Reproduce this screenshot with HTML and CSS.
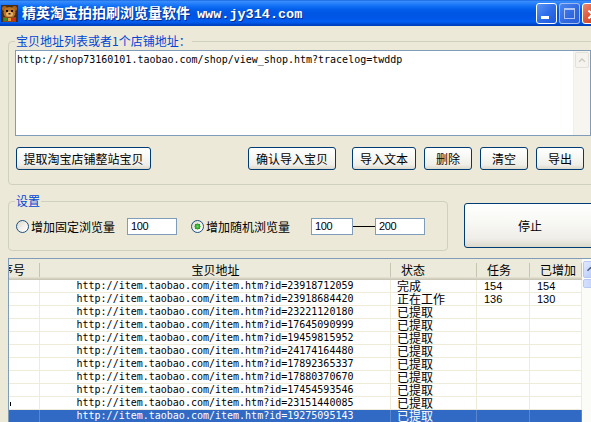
FILE: index.html
```html
<!DOCTYPE html>
<html>
<head>
<meta charset="utf-8">
<title>精英淘宝拍拍刷浏览量软件</title>
<link rel="stylesheet" href="styles.css">
</head>
<body>
<div class="window">
  <div class="titlebar">
    <svg class="appicon" width="17" height="17" viewBox="0 0 17 17">
      <rect x="0" y="0" width="17" height="17" fill="#4a2c14"/>
      <circle cx="3.5" cy="3.5" r="2.5" fill="#a8621e"/>
      <circle cx="13.5" cy="3.5" r="2.5" fill="#a8621e"/>
      <ellipse cx="8.5" cy="7.5" rx="6" ry="5.5" fill="#b87428"/>
      <ellipse cx="8.5" cy="9" rx="3.5" ry="2.6" fill="#e8b468"/>
      <rect x="5" y="5" width="2" height="2" fill="#1a0c04"/>
      <rect x="10" y="5" width="2" height="2" fill="#1a0c04"/>
      <rect x="7.5" y="8" width="2" height="1.5" fill="#2a1408"/>
      <rect x="2" y="12" width="13" height="5" fill="#8c4a1c"/>
      <rect x="3" y="13" width="3" height="3" fill="#3c8a2c"/>
      <rect x="11" y="13" width="3" height="3" fill="#c8321e"/>
      <rect x="7" y="13" width="3" height="3" fill="#e0a040"/>
    </svg>
    <span class="title">精英淘宝拍拍刷浏览量软件<span class="title-url">www.jy314.com</span></span>
    <div class="winbtns">
      <div class="wb wb-min"><span class="g-min"></span></div>
      <div class="wb wb-max"><span class="g-max"></span></div>
      <div class="wb wb-close">
        <svg width="21" height="21" viewBox="0 0 21 21"><path d="M6 6 L15 15 M15 6 L6 15" stroke="#fff" stroke-width="2.2"/></svg>
      </div>
    </div>
  </div>

  <div class="client">
    <fieldset class="group group-urls">
      <legend>宝贝地址列表或者1个店铺地址：</legend>
      <div class="textbox">
        <div class="textbox-text">http://shop73160101.taobao.com/shop/view_shop.htm?tracelog=twddp</div>
        <div class="tb-scroll">
          <div class="tb-up">
            <svg width="15" height="15" viewBox="0 0 15 15"><path d="M4 9 L7.5 5.5 L11 9" fill="none" stroke="#c9c7ba" stroke-width="1.6"/></svg>
          </div>
        </div>
      </div>
      <div class="btnrow">
        <button class="btn b-fetch">提取淘宝店铺整站宝贝</button>
        <button class="btn b-confirm">确认导入宝贝</button>
        <button class="btn b-import">导入文本</button>
        <button class="btn b-small">删除</button>
        <button class="btn b-small">清空</button>
        <button class="btn b-small">导出</button>
      </div>
    </fieldset>

    <div class="settings-row">
      <fieldset class="group group-settings">
        <legend>设置</legend>
        <div class="opts">
          <span class="radio"></span>
          <span class="lbl">增加固定浏览量</span>
          <span class="input in-fixed">100</span>
          <span class="radio checked"></span>
          <span class="lbl">增加随机浏览量</span>
          <span class="input in-min">100</span>
          <span class="dash"></span>
          <span class="input in-max">200</span>
        </div>
      </fieldset>
      <button class="btn btn-stop">停止</button>
    </div>

    <div class="listview">
      <div class="lv-main">
        <div class="lv-head">
          <span class="h-no"><span class="h-no-text">序号</span></span>
          <span class="h-url">宝贝地址</span>
          <span class="h-col">状态</span>
          <span class="h-col">任务</span>
          <span class="h-col">已增加</span>
        </div>
        <div class="lv-row"><span></span><span class="c-url">http://item.taobao.com/item.htm?id=23918712059</span><span class="c-st">完成</span><span class="c-num">154</span><span class="c-num">154</span></div>
        <div class="lv-row"><span></span><span class="c-url">http://item.taobao.com/item.htm?id=23918684420</span><span class="c-st">正在工作</span><span class="c-num">136</span><span class="c-num">130</span></div>
        <div class="lv-row"><span></span><span class="c-url">http://item.taobao.com/item.htm?id=23221120180</span><span class="c-st">已提取</span><span class="c-num"></span><span class="c-num"></span></div>
        <div class="lv-row"><span></span><span class="c-url">http://item.taobao.com/item.htm?id=17645090999</span><span class="c-st">已提取</span><span class="c-num"></span><span class="c-num"></span></div>
        <div class="lv-row"><span></span><span class="c-url">http://item.taobao.com/item.htm?id=19459815952</span><span class="c-st">已提取</span><span class="c-num"></span><span class="c-num"></span></div>
        <div class="lv-row"><span></span><span class="c-url">http://item.taobao.com/item.htm?id=24174164480</span><span class="c-st">已提取</span><span class="c-num"></span><span class="c-num"></span></div>
        <div class="lv-row"><span></span><span class="c-url">http://item.taobao.com/item.htm?id=17892365337</span><span class="c-st">已提取</span><span class="c-num"></span><span class="c-num"></span></div>
        <div class="lv-row"><span></span><span class="c-url">http://item.taobao.com/item.htm?id=17880370670</span><span class="c-st">已提取</span><span class="c-num"></span><span class="c-num"></span></div>
        <div class="lv-row"><span></span><span class="c-url">http://item.taobao.com/item.htm?id=17454593546</span><span class="c-st">已提取</span><span class="c-num"></span><span class="c-num"></span></div>
        <div class="lv-row"><span class="c-focus"></span><span class="c-url">http://item.taobao.com/item.htm?id=23151440085</span><span class="c-st">已提取</span><span class="c-num"></span><span class="c-num"></span></div>
        <div class="lv-row selected"><span></span><span class="c-url">http://item.taobao.com/item.htm?id=19275095143</span><span class="c-st">已提取</span><span class="c-num"></span><span class="c-num"></span></div>
      </div>
      <div class="lv-scroll">
        <div class="lv-up">
          <svg width="15" height="15" viewBox="0 0 15 15"><path d="M4 9 L7.5 5.5 L11 9" fill="none" stroke="#4d6185" stroke-width="1.8"/></svg>
        </div>
        <div class="lv-thumb"></div>
      </div>
    </div>
  </div>
</div>
</body>
</html>
```

FILE: styles.css
```css
* { box-sizing: border-box; }
html, body { margin: 0; padding: 0; }
body {
  width: 591px;
  height: 422px;
  overflow: hidden;
  background: #ECE9D8;
  font-family: "Noto Sans CJK SC", "Noto Sans", sans-serif;
  font-size: 12px;
  color: #000;
}
.window { width: 608px; }

/* ---------- title bar ---------- */
.titlebar {
  height: 26px;
  display: flex;
  align-items: center;
  padding-left: 1px;
  background: linear-gradient(180deg,
    #0A5AD8 0px, #3D8FF8 1px, #2A83FB 3px, #1170F5 6px,
    #0461EC 9px, #0058E6 12px, #0055E4 16px, #0057EA 19px,
    #045FF2 21px, #0258E6 23px, #0048CC 24px, #003FB8 26px);
}
.appicon { flex: none; margin-top: 1px; }
.title {
  margin-left: 4px;
  color: #fff;
  font-weight: bold;
  font-size: 14px;
  line-height: 16px;
  text-shadow: 1px 1px 0 #0B2A86;
  white-space: nowrap;
}
.title-url {
  margin-left: 7px;
  font-family: "Liberation Mono", monospace;
  font-size: 13.5px;
}
.winbtns {
  margin-left: auto;
  display: flex;
  gap: 2px;
  margin-right: 5px;
}
.wb {
  width: 21px;
  height: 21px;
  border-radius: 3px;
  border: 1px solid #fff;
  display: flex;
}
.wb-min {
  background: linear-gradient(135deg, #5A96F8 0%, #2F6EEA 50%, #1D58DC 100%);
  align-items: flex-end;
  padding: 0 0 4px 4px;
}
.g-min { width: 8px; height: 3px; background: #fff; }
.wb-max {
  border-color: rgba(255,255,255,0.55);
  background: linear-gradient(135deg, #4A86EE 0%, #3168DF 60%, #2A5DD6 100%);
  align-items: center;
  justify-content: center;
}
.g-max {
  width: 11px;
  height: 11px;
  border: 1px solid rgba(255,255,255,0.6);
  border-top-width: 2px;
}
.wb-close {
  background: linear-gradient(135deg, #EA8A70 0%, #E0583C 45%, #C8401F 100%);
}

/* ---------- client ---------- */
.client { padding-left: 8px; }

.group {
  margin: 0;
  border: 1px solid #D0D0BF;
  border-radius: 4px;
  min-width: 0;
}
.group legend {
  padding: 0 1px;
  color: #0046D5;
  font-size: 12px;
  line-height: 14px;
}
.group-urls {
  margin-top: 8px;
  width: 600px;
  padding: 2px 6px 14px 6px;
}

.textbox {
  width: 576px;
  height: 86px;
  border: 1px solid #7F9DB9;
  background: #fff;
  display: flex;
}
.textbox-text {
  flex: 1;
  padding: 3px 1px;
  font-family: "DejaVu Sans Mono", "Liberation Mono", monospace;
  font-size: 10px;
  line-height: 12px;
  white-space: nowrap;
}
.tb-scroll {
  width: 17px;
  background: #F6F5F0;
  border-left: 1px solid #F0EFE9;
}
.tb-up {
  margin: 1px 1px 0 1px;
  height: 16px;
  border: 1px solid #E3E1D8;
  border-radius: 2px;
  background: #F4F3EE;
  display: flex;
  align-items: center;
  justify-content: center;
}

.btnrow {
  margin-top: 11px;
  display: flex;
}
.btn {
  height: 23px;
  padding: 0;
  border: 1px solid #003C74;
  border-radius: 3px;
  background: linear-gradient(180deg, #FFFFFF 0%, #F8F8F5 40%, #EFEEE8 80%, #DCD8CC 100%);
  font-family: "Noto Sans CJK SC", sans-serif;
  font-size: 12px;
  line-height: 14px;
  color: #000;
  display: flex;
  align-items: center;
  justify-content: center;
}
.b-fetch { width: 135px; margin-left: 1px; }
.b-confirm { width: 88px; margin-left: 97px; }
.b-import { width: 64px; margin-left: 16px; }
.b-small { width: 48px; margin-left: 8px; }

/* ---------- settings ---------- */
.settings-row {
  display: flex;
  align-items: flex-start;
  margin-top: 9px;
}
.group-settings {
  width: 440px;
  padding: 10px 6px 15px 6px;
}
.opts {
  height: 17px;
  display: flex;
  align-items: center;
}
.radio {
  width: 13px;
  height: 13px;
  border-radius: 50%;
  border: 1px solid #1C5180;
  background: linear-gradient(135deg, #DCD8CC 0%, #F4F3EE 60%, #FFFFFF 100%);
  margin-left: 1px;
  flex: none;
}
.radio.checked {
  margin-left: 14px;
  background:
    radial-gradient(circle at 50% 50%, #6BDB63 0, #2DAB2A 2px, #1F8F1E 2.8px, transparent 3.2px),
    linear-gradient(135deg, #DCD8CC 0%, #F4F3EE 60%, #FFFFFF 100%);
}
.lbl {
  margin-left: 2px;
  width: 84px;
  white-space: nowrap;
  line-height: 14px;
}
.input {
  height: 17px;
  border: 1px solid #7F9DB9;
  background: #fff;
  font-family: "Liberation Sans", sans-serif;
  font-size: 11px;
  letter-spacing: -0.4px;
  line-height: 15px;
  padding-left: 3px;
  flex: none;
}
.in-fixed { width: 50px; margin-left: 12px; }
.in-min { width: 42px; margin-left: 21px; }
.in-max { width: 50px; }
.dash {
  width: 22px;
  height: 1px;
  background: #000;
}
.btn-stop {
  margin-left: 16px;
  margin-top: 9px;
  width: 132px;
  height: 45px;
  flex: none;
}

/* ---------- list view ---------- */
.listview {
  margin-top: 7px;
  width: 592px;
  height: 170px;
  border: 1px solid #7F9DB9;
  background: #fff;
  display: flex;
}
.lv-main {
  width: 573px;
  display: flex;
  flex-direction: column;
}
.lv-head, .lv-row {
  display: grid;
  grid-template-columns: 31px 351px 86px 53px 52px;
}
.lv-head {
  height: 21px;
  background: linear-gradient(180deg, #EBEADB 0, #EBEADB 18px, #E2DECD 18px, #E2DECD 19px, #D6D2C2 19px, #D6D2C2 20px, #CBC7B8 20px);
}
.lv-head > span {
  padding-top: 3px;
  line-height: 15px;
  white-space: nowrap;
  overflow: hidden;
  background: linear-gradient(#C7C5B2, #C7C5B2) no-repeat right 0 top 4px / 1px 14px;
}
.h-no-text { margin-left: -8px; }
.h-url { text-align: center; }
.h-col { padding-left: 10px; }

.lv-row { height: 13px; }
.lv-row > span {
  border-right: 1px solid #EEEBD9;
  border-bottom: 1px solid #EEEBD9;
  line-height: 12px;
  white-space: nowrap;
  overflow: hidden;
}
.c-focus {
  background: linear-gradient(#000, #000) no-repeat left 1px top 5px / 1px 4px;
}
.c-url {
  text-align: center;
  font-family: "DejaVu Sans Mono", "Liberation Mono", monospace;
  font-size: 10px;
}
.c-st { padding-left: 6px; font-size: 12px; }
.c-num {
  padding-left: 7px;
  font-family: "Liberation Sans", sans-serif;
  font-size: 11px;
}
.lv-row.selected { background: #316AC5; color: #fff; }
.lv-row.selected > span { border-color: #5A86D0; }

.lv-scroll {
  width: 17px;
  background: #FBFBF8;
  display: flex;
  flex-direction: column;
}
.lv-up {
  height: 17px;
  margin: 2px 1px 0 1px;
  border: 1px solid #B6C9F5;
  border-radius: 2px;
  background: linear-gradient(135deg, #E2EAFE 0%, #C4D5FC 60%, #B3C8F8 100%);
  display: flex;
  align-items: center;
  justify-content: center;
}
.lv-thumb {
  height: 9px;
  margin: 1px 1px 0 1px;
  border: 1px solid #B6C9F5;
  border-radius: 2px;
  background: linear-gradient(90deg, #D4E0FD, #BCD0FB);
}
```
